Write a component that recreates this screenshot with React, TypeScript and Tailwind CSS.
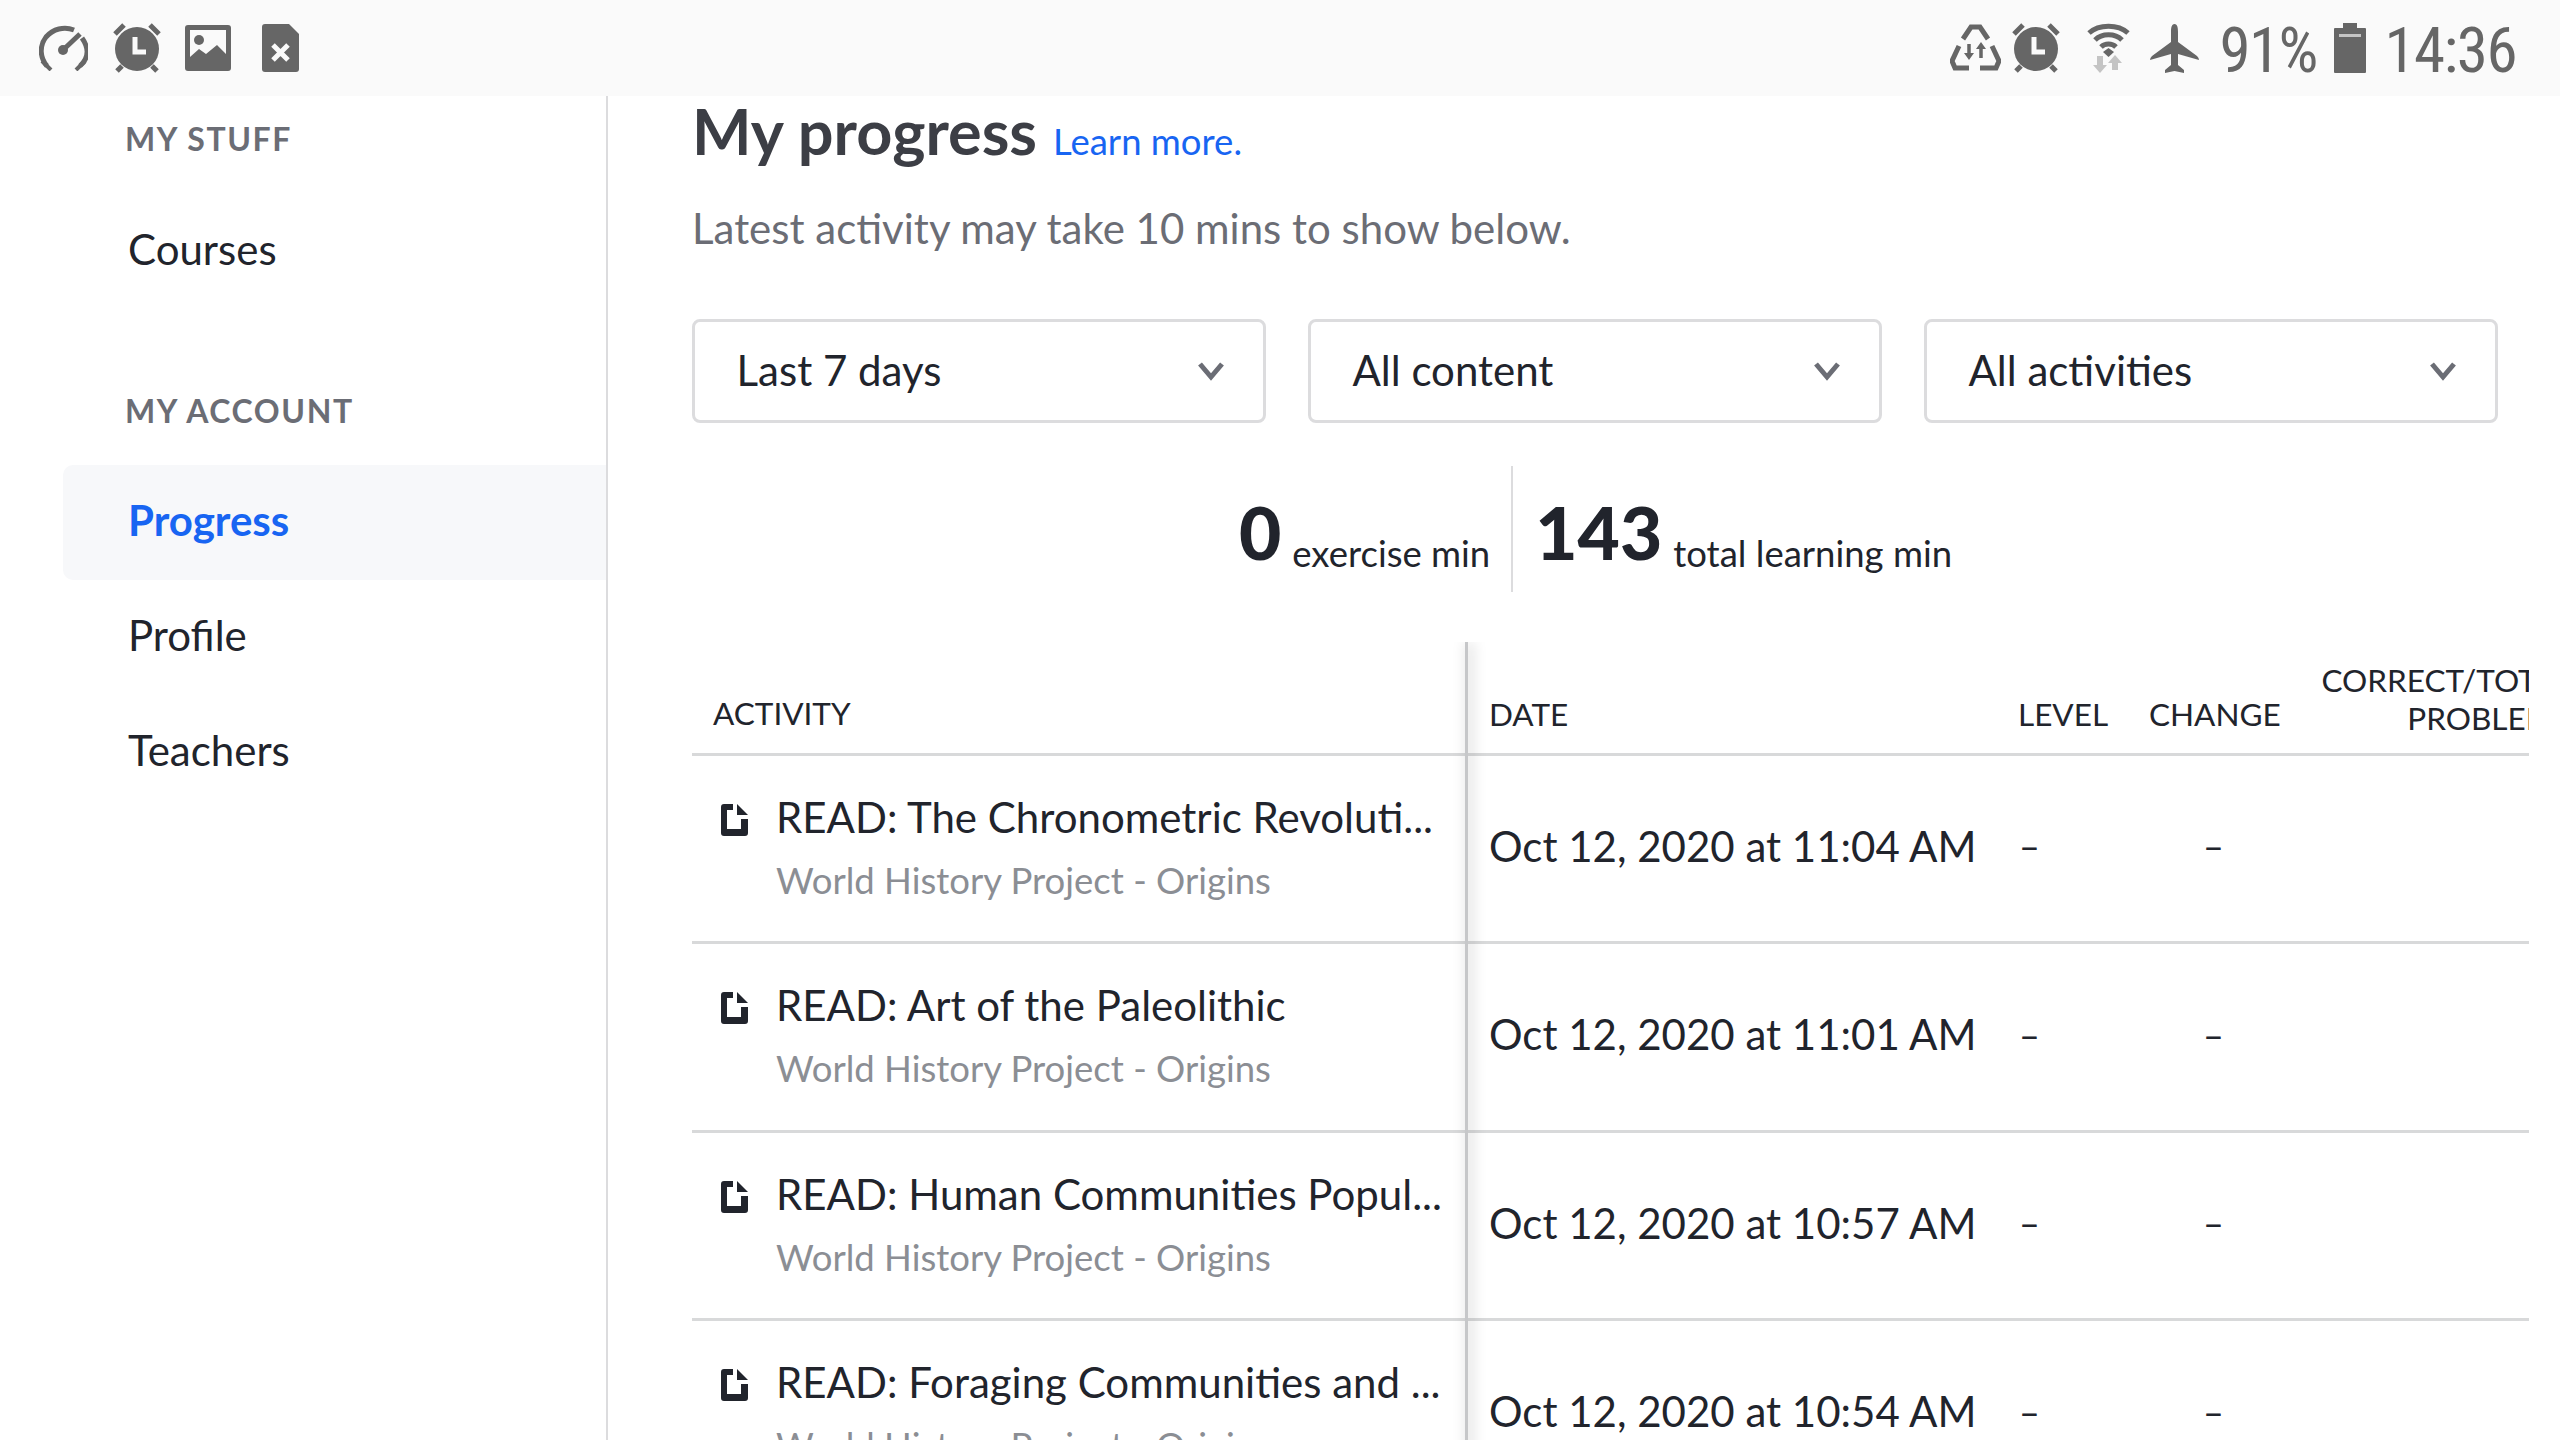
import type { ReactNode } from "react";

const rows = [
  { title: "READ: The Chronometric Revoluti...", date: "Oct 12, 2020 at 11:04 AM" },
  { title: "READ: Art of the Paleolithic", date: "Oct 12, 2020 at 11:01 AM" },
  { title: "READ: Human Communities Popul...", date: "Oct 12, 2020 at 10:57 AM" },
  { title: "READ: Foraging Communities and ...", date: "Oct 12, 2020 at 10:54 AM" },
];

function Gauge() {
  return (
    <svg width="49" height="46" viewBox="0 0 49 46" fill="none">
      <path d="M8 41 C1 33 0 21 7 12 C14 4 25 1 35 5" stroke="#666" strokeWidth="5" />
      <path d="M43 13 C50 23 50 33 41 41" stroke="#666" strokeWidth="5" />
      <path d="M3 36 L12 45 M46 36 L37 45" stroke="#666" strokeWidth="4" />
      <path d="M24 25 L41 9" stroke="#666" strokeWidth="5" />
      <circle cx="24" cy="25" r="5" fill="#666" />
    </svg>
  );
}

function Alarm() {
  return (
    <svg width="48" height="50" viewBox="0 0 48 50">
      <circle cx="24" cy="26" r="22" fill="#666" />
      <path d="M2 11 L11 2 M46 11 L37 2 M4 48 L9 43 M44 48 L39 43" stroke="#666" strokeWidth="5" />
      <path d="M22 14 V29 H33" stroke="#fafafa" strokeWidth="5" fill="none" />
    </svg>
  );
}

function ImageIcon() {
  return (
    <svg width="46" height="46" viewBox="0 0 46 46">
      <rect width="46" height="46" rx="3" fill="#666" />
      <rect x="5" y="5" width="36" height="27" fill="#fafafa" />
      <circle cx="14" cy="15" r="5" fill="#666" />
      <path d="M5 34 L5 32 L14 24 L21 29 L32 20 L41 29 V36 H5 Z" fill="#666" />
    </svg>
  );
}

function SimError() {
  return (
    <svg width="37" height="48" viewBox="0 0 37 48">
      <path d="M3 0 H27 L37 10 V45 Q37 48 34 48 H3 Q0 48 0 45 V3 Q0 0 3 0 Z" fill="#666" />
      <path d="M11 21 L26 36 M26 21 L11 36" stroke="#fafafa" strokeWidth="5" />
    </svg>
  );
}

function Recycle() {
  return (
    <svg width="51" height="48" viewBox="0 0 51 48" fill="none" stroke="#666">
      <path d="M13 15 L21 3 H30 L38 15" strokeWidth="5" />
      <path d="M9 22 L2 37 L5 44 H19 M42 22 L49 37 L46 44 H30" strokeWidth="5" />
      <path d="M19 20 V30 M31 34 V24" strokeWidth="3.5" />
      <path d="M14 29 H24 L19 36 Z M26 25 H36 L31 18 Z" fill="#666" stroke="none" />
    </svg>
  );
}

function Wifi() {
  return (
    <svg width="43" height="50" viewBox="0 0 43 50" fill="none">
      <path d="M2 10 C12 1 31 1 41 10 M8 17 C15 10 28 10 35 17 M14 24 C18 20 25 20 29 24" stroke="#666" strokeWidth="5" />
      <path d="M16 29 L21.5 25 L27 29 L21.5 34 Z" fill="#666" />
      <path d="M13 33 V43 M28 40 V47" stroke="#c4c4c4" strokeWidth="6" />
      <path d="M6 42 H20 L13 50 Z M21 40 H35 L28 32 Z" fill="#c4c4c4" />
    </svg>
  );
}

function Plane() {
  return (
    <svg width="49" height="49" viewBox="0 0 49 49">
      <path d="M24.5 0 C27.5 0 28 4 28 8 V18 L47 32 Q49 34 49 36 L28 30 V41 L34 46 V49 L24.5 47 L15 49 V46 L21 41 V30 L0 36 Q0 34 2 32 L21 18 V8 C21 4 21.5 0 24.5 0 Z" fill="#666" />
    </svg>
  );
}

function Battery() {
  return (
    <svg width="32" height="50" viewBox="0 0 32 50">
      <path d="M9 0 H23 V5 H31 Q32 5 32 6 V49 Q32 50 31 50 H1 Q0 50 0 49 V6 Q0 5 1 5 H9 Z" fill="#666" />
      <rect x="5" y="11" width="22" height="3" fill="#c4c4c4" />
    </svg>
  );
}

function StatusBar() {
  return (
    <div className="flex h-[96px] shrink-0 items-center justify-between bg-[#fafafa] pl-[39px] pr-[44px]">
      <div className="flex items-center">
        <Gauge />
        <div className="ml-[25px]">
          <Alarm />
        </div>
        <div className="ml-[24px]">
          <ImageIcon />
        </div>
        <div className="ml-[31px]">
          <SimError />
        </div>
      </div>
      <div className="flex items-center font-['Roboto',sans-serif] text-[63px] leading-none text-[#666] [font-stretch:condensed]">
        <Recycle />
        <div className="ml-[11px]">
          <Alarm />
        </div>
        <div className="ml-[27px]">
          <Wifi />
        </div>
        <div className="ml-[20px]">
          <Plane />
        </div>
        <span className="ml-[20px] w-[98px] whitespace-nowrap pt-[4px] tracking-[-1.5px]">91%</span>
        <div className="ml-[17px]">
          <Battery />
        </div>
        <span className="ml-[18px] whitespace-nowrap pt-[4px] tracking-[-1.5px]">14:36</span>
      </div>
    </div>
  );
}

function SideLink({ children, active = false }: { children: ReactNode; active?: boolean }) {
  return (
    <div
      className={[
        "ml-[63px] flex h-[115px] items-center rounded-l-[10px] pb-[5px] pl-[65px] text-[42px]",
        active ? "bg-[#f7f8fa] font-bold text-[#1865f2]" : "text-[#21242c]",
      ].join(" ")}
    >
      {children}
    </div>
  );
}

function SideHeading({ children }: { children: ReactNode }) {
  return (
    <div className="pl-[125px] text-[32px] leading-[40px] font-bold uppercase tracking-[1.6px] text-[#6b6d75]">
      {children}
    </div>
  );
}

function Sidebar() {
  return (
    <aside className="flex w-[608px] shrink-0 flex-col border-r-2 border-[#dcdcde] pt-[23px]">
      <SideHeading>My stuff</SideHeading>
      <div className="mt-[35px]">
        <SideLink>Courses</SideLink>
      </div>
      <div className="mt-[82px]">
        <SideHeading>My account</SideHeading>
      </div>
      <div className="mt-[34px]">
        <SideLink active>Progress</SideLink>
        <SideLink>Profile</SideLink>
        <SideLink>Teachers</SideLink>
      </div>
    </aside>
  );
}

function FilterSelect({ label }: { label: string }) {
  return (
    <div className="flex h-[104px] w-[574px] items-center justify-between rounded-[8px] border-[3px] border-[#dcdcde] pl-[41.5px] pr-[38px] text-[42px] text-[#21242c]">
      <span>{label}</span>
      <svg width="28" height="20" viewBox="0 0 28 20" fill="none">
        <path d="M3 3 L14 16 L25 3" stroke="#6b6d75" strokeWidth="5" />
      </svg>
    </div>
  );
}

function ReadIcon() {
  return (
    <svg width="27" height="32" viewBox="0 0 27 32" className="mt-[17px] shrink-0">
      <path d="M3 0 H12 V6 H6 V25 H20 V15 H27 V29 Q27 32 24 32 H3 Q0 32 0 29 V3 Q0 0 3 0 Z" fill="#21242c" />
      <path d="M16 0 L27 11 H16 Z" fill="#21242c" />
    </svg>
  );
}

function Row({ title, date }: { title: string; date: string }) {
  return (
    <div className="flex h-[188.5px] shrink-0 border-b-[3px] border-[#d8d9da]">
      <div className="w-[773px] shrink-0 pl-[29px] pt-[31px]">
        <div className="flex gap-[28px]">
          <ReadIcon />
          <div className="whitespace-nowrap">
            <div className="text-[42px] leading-[60px] text-[#21242c]">{title}</div>
            <div className="mt-[3px] text-[36.5px] leading-[60px] text-[#8b8e94]">World History Project - Origins</div>
          </div>
        </div>
      </div>
      <div className="flex flex-1 items-center pb-[5px] text-[42px] text-[#21242c]">
        <span className="w-[553px] shrink-0 pl-[24px] whitespace-nowrap">{date}</span>
        <span className="w-[131px] shrink-0 pl-[1px] text-[36px]">–</span>
        <span className="w-[130px] shrink-0 pl-[54px] text-[36px]">–</span>
      </div>
    </div>
  );
}

function ActivityTable() {
  return (
    <div className="relative mt-[50px] w-[1837px] overflow-hidden">
      <div className="flex h-[114px] items-end border-b-[3px] border-[#d8d9da] pb-[16px] text-[31.5px] leading-[38px] text-[#21242c]">
        <span className="mb-[5px] w-[773px] shrink-0 pl-[21px]">ACTIVITY</span>
        <span className="mb-[4px] w-[553px] shrink-0 pl-[24px]">DATE</span>
        <span className="mb-[4px] w-[131px] shrink-0">LEVEL</span>
        <span className="mb-[4px] w-[150px] shrink-0">CHANGE</span>
        <span className="w-[273px] shrink-0 whitespace-nowrap text-right">
          CORRECT/TOTAL
          <br />
          PROBLEMS
        </span>
      </div>
      {rows.map((row) => (
        <Row key={row.date} title={row.title} date={row.date} />
      ))}
      <div className="absolute bottom-0 left-[773px] top-0 w-[3px] bg-[#c6c7c9] shadow-[3px_0_14px_rgba(0,0,0,0.34)]" />
    </div>
  );
}

export default function App() {
  return (
    <div className="flex h-[1440px] w-[2560px] flex-col overflow-hidden bg-white font-['Lato',sans-serif]">
      <StatusBar />
      <div className="flex min-h-0 flex-1">
        <Sidebar />
        <main className="min-w-0 flex-1 pl-[84px]">
          <div className="flex items-baseline gap-[16px]">
            <h1 className="text-[63px] font-bold leading-[70px] text-[#3c3e45]">My progress</h1>
            <a className="text-[36.5px] text-[#1865f2]">Learn more.</a>
          </div>
          <p className="mt-[34px] text-[42px] leading-[50px] text-[#6b6d75]">
            Latest activity may take 10 mins to show below.
          </p>
          <div className="mt-[66px] flex gap-[42px]">
            <FilterSelect label="Last 7 days" />
            <FilterSelect label="All content" />
            <FilterSelect label="All activities" />
          </div>
          <div className="mt-[43px] flex h-[126px] w-[1807px] justify-center">
            <div className="flex items-end pb-[22px] pr-[21px]">
              <span className="text-[73px] font-black leading-[76px] text-[#21242c]">0</span>
              <span className="ml-[11px] text-[36.5px] leading-[33px] text-[#21242c]">exercise min</span>
            </div>
            <div className="flex items-end border-l-2 border-[#dcdcde] pb-[22px] pl-[22px]">
              <span className="text-[73px] font-black leading-[76px] text-[#21242c]">143</span>
              <span className="ml-[11px] text-[36.5px] leading-[33px] text-[#21242c]">total learning min</span>
            </div>
          </div>
          <ActivityTable />
        </main>
      </div>
    </div>
  );
}
